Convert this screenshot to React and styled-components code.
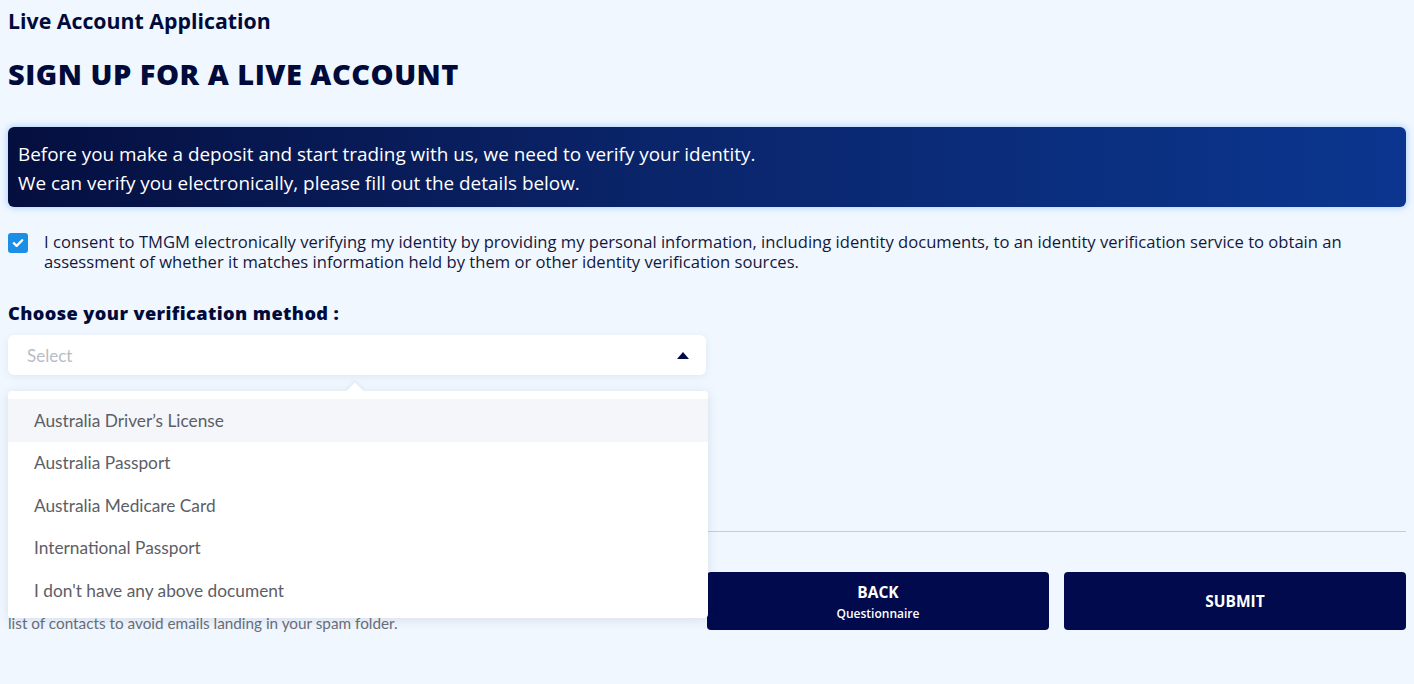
import styled, { createGlobalStyle } from "styled-components";

const options = [
    "Australia Driver’s License",
    "Australia Passport",
    "Australia Medicare Card",
    "International Passport",
    "I don't have any above document",
];

const App = () => {
    return (
        <>
            <GlobalStyle />
            <Page>
                <PageTitle>Live Account Application</PageTitle>
                <Heading>SIGN UP FOR A LIVE ACCOUNT</Heading>

                <Banner>
                    <p>Before you make a deposit and start trading with us, we need to verify your identity.</p>
                    <p>We can verify you electronically, please fill out the details below.</p>
                </Banner>

                <Consent>
                    <CheckBox>
                        <svg width="14" height="14" viewBox="0 0 14 14">
                            <path d="M2.8 7.2l2.8 2.7L11.2 4.3" fill="none" stroke="#fff" strokeWidth="2.3" strokeLinecap="round" strokeLinejoin="round" />
                        </svg>
                    </CheckBox>
                    <ConsentText>
                        I consent to TMGM electronically verifying my identity by providing my personal information, including identity documents, to an identity verification service to obtain an assessment of whether it matches information held by them or other identity verification sources.
                    </ConsentText>
                </Consent>

                <FieldLabel>Choose your verification method :</FieldLabel>
                <SelectWrap>
                    <SelectBox>
                        <Placeholder>Select</Placeholder>
                        <Caret />
                    </SelectBox>
                    <Menu>
                        {options.map((o, i) => (
                            <MenuItem key={o} $active={i === 0}>{o}</MenuItem>
                        ))}
                    </Menu>
                </SelectWrap>

                <Divider />

                <Footer>
                    <Note>list of contacts to avoid emails landing in your spam folder.</Note>
                    <ActionButton>
                        BACK
                        <small>Questionnaire</small>
                    </ActionButton>
                    <ActionButton>SUBMIT</ActionButton>
                </Footer>
            </Page>
        </>
    );
};

const GlobalStyle = createGlobalStyle`
    body {
        margin: 0;
        background: #f0f7ff;
        font-family: "Open Sans", "Noto Sans", sans-serif;
        color: #0c0f3a;
    }
    * { box-sizing: border-box; }
`;

const Page = styled.div`
    padding: 6px 8px 40px 8px;
    min-height: 684px;
`;

const PageTitle = styled.h1`
    margin: 0;
    font-size: 21.3px;
    line-height: 30px;
    font-weight: 700;
    color: #000a3b;
`;

const Heading = styled.h2`
    margin: 18px 0 0;
    font-size: 29px;
    line-height: 40px;
    font-weight: 800;
    color: #000a3b;
    letter-spacing: 0.5px;
`;

const Banner = styled.div`
    margin-top: 33px;
    height: 80px;
    padding: 13px 10px;
    border-radius: 6px;
    background: linear-gradient(90deg, #050f3f 0%, #0a2469 45%, #0b368f 100%);
    box-shadow: 0 0 6px 1px rgba(120, 180, 255, 0.55);
    color: #fff;
    font-size: 18.9px;
    line-height: 29px;

    p {
        margin: 0;
    }
`;

const Consent = styled.div`
    display: flex;
    gap: 16px;
    margin-top: 25px;
`;

const CheckBox = styled.span`
    flex: none;
    display: flex;
    align-items: center;
    justify-content: center;
    width: 20px;
    height: 20px;
    margin-top: 1px;
    border-radius: 3px;
    background: #1c8ee6;
`;

const ConsentText = styled.p`
    margin: 0;
    font-size: 16.6px;
    line-height: 20px;
    color: #14173d;
`;

const FieldLabel = styled.div`
    margin-top: 28px;
    font-size: 18.2px;
    line-height: 26px;
    font-weight: 800;
    color: #000a3b;
    letter-spacing: 0.4px;
`;

const SelectWrap = styled.div`
    position: relative;
    width: 698px;
    margin-top: 9px;
`;

const SelectBox = styled.div`
    display: flex;
    align-items: center;
    justify-content: space-between;
    height: 40px;
    padding: 0 17px 0 19px;
    background: #fff;
    border-radius: 6px;
    box-shadow: 0 2px 8px rgba(30, 60, 110, 0.08);
`;

const Placeholder = styled.span`
    font-family: "Lato", sans-serif;
    font-size: 17px;
    color: #b8bcc6;
`;

const Caret = styled.span`
    width: 0;
    height: 0;
    border-left: 6.5px solid transparent;
    border-right: 6.5px solid transparent;
    border-bottom: 7px solid #000a4a;
`;

const Menu = styled.ul`
    position: absolute;
    top: 56px;
    left: 0;
    width: 700px;
    margin: 0;
    padding: 8px 0 6px;
    list-style: none;
    background: #fff;
    border-radius: 4px;
    box-shadow: 0 2px 12px rgba(30, 50, 90, 0.12);
    z-index: 5;

    &::before {
        content: "";
        position: absolute;
        top: -6px;
        left: 341px;
        width: 12px;
        height: 12px;
        background: #fff;
        transform: rotate(45deg);
        box-shadow: -2px -2px 3px rgba(30, 50, 90, 0.05);
    }
`;

const MenuItem = styled.li`
    position: relative;
    height: 42.5px;
    padding: 0 26px;
    display: flex;
    align-items: center;
    font-family: "Lato", sans-serif;
    font-size: 17.3px;
    color: #5c5e66;
    background: ${({ $active }) => ($active ? "#f4f6fa" : "#fff")};
`;

const Divider = styled.hr`
    margin: 156px 0 0;
    border: none;
    border-top: 1px solid #c9ccd4;
`;

const Footer = styled.div`
    display: grid;
    grid-template-columns: 1fr 342px 342px;
    gap: 15px;
    align-items: end;
    margin-top: 40px;
`;

const Note = styled.p`
    margin: 0 0 -3px;
    font-family: "Lato", sans-serif;
    font-size: 15.3px;
    line-height: 20px;
    color: #6b6e78;
`;

const ActionButton = styled.button`
    height: 58px;
    border: none;
    border-radius: 4px;
    background: #000a4d;
    color: #fff;
    font-family: "Open Sans", sans-serif;
    font-size: 15.5px;
    font-weight: 700;
    display: flex;
    flex-direction: column;
    align-items: center;
    justify-content: center;
    gap: 2px;

    small {
        font-size: 12px;
        font-weight: 600;
    }
`;

export default App;
